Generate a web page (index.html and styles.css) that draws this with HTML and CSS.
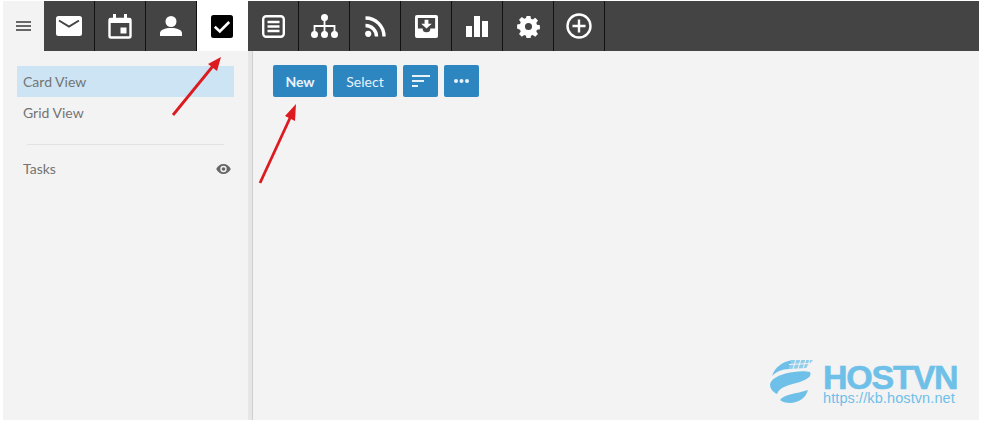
FILE: index.html
```html
<!DOCTYPE html>
<html lang="en">
<head>
<meta charset="utf-8">
<title>Tasks</title>
<link rel="stylesheet" href="styles.css">
</head>
<body>
<div class="app">
  <header class="topbar">
    <div class="menu-cell">
      <svg class="ico-menu" viewBox="0 0 15 10"><path d="M0 1h15M0 5h15M0 9h15"/></svg>
    </div>
    <nav class="tabs">
      <div class="tab"><svg width="26" height="20" viewBox="0 0 26 20"><rect class="w" width="26" height="20" rx="2.500"/><path class="cut" d="M3 4.500l10 6 10-6"/></svg></div>
      <div class="tab"><svg width="24" height="25" viewBox="0 0 24 25"><path class="line" d="M3 5h18a1.500 1.500 0 0 1 1.500 1.500v15.500a1.500 1.500 0 0 1-1.500 1.500H3A1.500 1.500 0 0 1 1.500 22V6.500A1.500 1.500 0 0 1 3 5z"/><path class="w" d="M1 4h22v5H1zM5 0h3v5H5zM16 0h3v5h-3zM12.500 13.500h6v6h-6z"/></svg></div>
      <div class="tab"><svg width="22" height="20" viewBox="0 0 22 20"><circle class="w" cx="11" cy="5.500" r="5.500"/><path class="w" d="M0 20v-3c0-3 5-5 11-5s11 2 11 5v3z"/></svg></div>
      <div class="tab tab-on"><svg width="22" height="23" viewBox="0 0 22 23"><rect class="k" width="22" height="23" rx="2.500"/><path class="cut" d="M3.800 11.800l5 4.700 9.400-9.500"/></svg></div>
      <div class="tab"><svg width="23" height="23" viewBox="0 0 23 23"><rect class="line" x="1.200" y="1.200" width="20.600" height="20.600" rx="3"/><path class="line" d="M5.500 7h12M5.500 11.500h12M5.500 16h12"/></svg></div>
      <div class="tab"><svg width="27" height="24" viewBox="0 0 27 24"><circle class="w" cx="13.500" cy="3.500" r="3.500"/><path class="thin" d="M13.500 6v7M3.500 18v-6h20v6M13.500 12v6"/><circle class="w" cx="3.500" cy="20.500" r="3.500"/><circle class="w" cx="13.500" cy="20.500" r="3.500"/><circle class="w" cx="23.500" cy="20.500" r="3.500"/></svg></div>
      <div class="tab"><svg width="21" height="21" viewBox="0 0 21 21"><circle class="w" cx="3.200" cy="17.800" r="3.100"/><path class="rss" d="M.5 9.500A11 11 0 0 1 11.500 20.500M.5 2A18.500 18.500 0 0 1 19 20.500"/></svg></div>
      <div class="tab"><svg width="23" height="23" viewBox="0 0 24 24"><rect class="w" width="24" height="24" rx="2"/><path class="d" d="M3 3h18v11h-5a4 4 0 0 1-8 0H3z"/><path class="w" d="M10 5h4v4h3.500L12 14 6.500 9H10z"/></svg></div>
      <div class="tab"><svg width="22" height="21" viewBox="0 0 22 21"><path class="w" d="M0 10h6v11H0zM8 0h6v21H8zM16 5h6v16h-6z"/></svg></div>
      <div class="tab"><svg width="23" height="23" viewBox="-1 -1 26 26"><path class="w" fill-rule="evenodd" d="M9.800 0h4.400l.6 3.300 2 .8 2.800-1.900 3.100 3.100-1.900 2.800.8 2 3.300.6v4.400l-3.300.6-.8 2 1.900 2.800-3.100 3.100-2.800-1.900-2 .8-.6 3.300H9.800l-.6-3.300-2-.8-2.800 1.900-3.100-3.100 1.900-2.800-.8-2L-.9 14.200V9.800l3.300-.6.8-2-1.900-2.800 3.100-3.100 2.800 1.900 2-.8zM12 8a4 4 0 1 0 0 8 4 4 0 0 0 0-8z"/></svg></div>
      <div class="tab"><svg width="26" height="26" viewBox="0 0 26 26"><circle class="line" cx="13" cy="13" r="11.500"/><path class="line" d="M13 6.500v13M6.500 13h13"/></svg></div>
    </nav>
  </header>
  <div class="body">
    <aside class="side">
      <div class="view view-on">Card View</div>
      <div class="view">Grid View</div>
      <hr class="rule">
      <div class="view row"><span>Tasks</span>
        <svg class="eye" viewBox="0 0 16 11"><path fill-rule="evenodd" d="M8 0c3.600 0 6.500 2.300 8 5.500C14.500 8.700 11.600 11 8 11S1.500 8.700 0 5.500C1.500 2.300 4.400 0 8 0zm0 2a3.500 3.500 0 1 0 0 7 3.500 3.500 0 0 0 0-7zm0 1.500a2 2 0 1 1 0 4 2 2 0 0 1 0-4z"/></svg>
      </div>
    </aside>
    <div class="split"></div>
    <main class="main">
      <div class="toolbar">
        <button class="btn btn-new">New</button>
        <button class="btn btn-sel">Select</button>
        <button class="btn btn-ico"><svg class="sort" viewBox="0 0 18 12"><path d="M0 1h18M0 6h12M0 11h6"/></svg></button>
        <button class="btn btn-ico"><svg class="dots" viewBox="0 0 15 4"><circle cx="2" cy="2" r="2"/><circle cx="7.500" cy="2" r="2"/><circle cx="13" cy="2" r="2"/></svg></button>
      </div>
    </main>
  </div>
</div>
<svg class="arrows" viewBox="0 0 982 425">
  <path class="shaft" d="M173 115L213 66"/><path class="head" d="M221 57L217 71 208 64z"/>
  <path class="shaft" d="M260 183L290 118"/><path class="head" d="M296 104L295 121 285 116z"/>
</svg>
<div class="logo">
  <svg class="globe" viewBox="0 0 46 46">
    <path d="M2 18C5 9 12 4 22 2L19 11C12 11 6 14 2 18z"/>
    <path class="grid" d="M22 2L43 2 36 10 19 11z"/>
    <path class="gridline" d="M19 6.500L40 5.500M26 1L23 11M31 1L28 11M36 1L33 11M40 1L37 11"/>
    <path d="M0 26C2 19 14 15 24 14 30 13 36 13 40 14 42 18 38 21 30 24 20 27 10 28 7 36 3 34 0 31 0 26z"/>
    <path d="M10 42C14 36 26 36 38 32 36 40 28 45 20 45 16 45 12 44 10 42z"/>
  </svg>
  <div class="logo-text">
    <div class="logo-name">HOSTVN</div>
    <div class="logo-url">https://kb.hostvn.net</div>
  </div>
</div>
</body>
</html>
```

FILE: styles.css
```css
* { box-sizing: border-box; }
html, body { margin: 0; height: 100%; }
body {
  width: 982px;
  height: 425px;
  background: #fff;
  padding: 1px 3px 5px 3px;
  font-family: Lato, "Open Sans", sans-serif;
  position: relative;
  overflow: hidden;
}
.app { height: 419px; display: flex; flex-direction: column; background: #f3f3f3; }
.topbar { height: 50px; display: flex; background: #444; flex: none; }
.menu-cell { width: 41px; background: #f3f3f3; display: flex; align-items: center; justify-content: center; }
.ico-menu { width: 15px; height: 10px; fill: none; stroke: #666; stroke-width: 2; }
.tabs { display: flex; flex: 1; }
.tab { width: 51px; display: flex; align-items: center; justify-content: center; border-right: 1px solid #111; }
.tab-on { background: #fff; border-right-color: #fff; }
.w { fill: #fff; }
.k { fill: #000; }
.d { fill: #444; }
.cut { fill: none; stroke: #444; stroke-width: 2; }
.tab-on .cut { stroke: #fff; stroke-width: 2.600; }
.line { fill: none; stroke: #fff; stroke-width: 2.400; }
.thin { fill: none; stroke: #fff; stroke-width: 1.800; }
.rss { fill: none; stroke: #fff; stroke-width: 3.400; }
.body { flex: 1; display: flex; min-height: 0; }
.side { width: 245px; padding: 15px 14px 0; flex: none; }
.view {
  height: 31px;
  padding: 0 6px;
  display: flex;
  align-items: center;
  font-size: 14px;
  color: #747474;
}
.view-on { background: #cce4f3; }
.rule { border: 0; border-top: 1px solid #e2e2e2; margin: 16px 10px 8px; }
.row { justify-content: space-between; padding-right: 3px; }
.eye { width: 15px; height: 10px; fill: #666; }
.split { width: 5px; flex: none; background: #e6e6e6; border-right: 1px solid #cfcfcf; }
.main { flex: 1; padding: 14px 20px; }
.toolbar { display: flex; gap: 6px; }
.btn {
  height: 32px;
  border: 0;
  border-radius: 2px;
  background: #2e86c1;
  color: #e8f2f9;
  font: 700 14px Lato, sans-serif;
  padding: 0;
  display: flex;
  align-items: center;
  justify-content: center;
}
.btn-new { width: 54px; }
.btn-sel { width: 64px; font-weight: 400; }
.btn-ico { width: 35px; }
.sort { width: 18px; height: 12px; fill: none; stroke: #e8f2f9; stroke-width: 2; }
.dots { width: 15px; height: 4px; fill: #e8f2f9; }
.arrows { position: absolute; left: 0; top: 0; width: 982px; height: 425px; pointer-events: none; }
.shaft { stroke: #dc1a1f; stroke-width: 2.800; fill: none; }
.head { fill: #dc1a1f; }
.logo { position: absolute; left: 770px; top: 358px; display: flex; gap: 7px; color: #6fc0e8; }
.globe { width: 46px; height: 46px; flex: none; fill: #6fc0e8; }
.grid { fill: #6fc0e8; opacity: .75; }
.gridline { fill: none; stroke: #f3f3f3; stroke-width: 1; }
.logo-text { margin-top: 5px; }
.logo-name {
  font: 700 34px/28px "Liberation Sans", sans-serif;
  letter-spacing: -1.200px;
  -webkit-text-stroke: .6px #6fc0e8;
}
.logo-url { font: 400 14.500px/14px "Liberation Sans", sans-serif; letter-spacing: .1px; }
```
